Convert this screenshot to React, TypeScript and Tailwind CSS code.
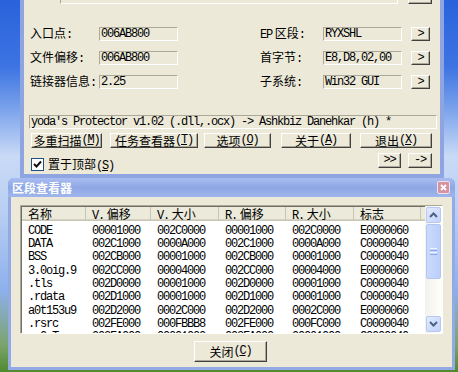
import React from 'react';

const M: React.FC<{ children: React.ReactNode; className?: string }> = ({ children, className = '' }) => (
  <span className={`font-['Liberation_Mono',monospace] tracking-[-1.2px] ${className}`}>{children}</span>
);

const Key: React.FC<{ k: string }> = ({ k }) => (
  <M>
    (<span className="underline underline-offset-[1px]">{k}</span>)
  </M>
);

const Field: React.FC<{ value?: string; className?: string }> = ({ value, className = '' }) => (
  <div className={`shrink-0 h-[14px] flex items-center border border-t-[#aca899] border-l-[#aca899] border-r-white border-b-white pl-[1px] leading-[12px] whitespace-nowrap ${className}`}>
    {value && <M>{value}</M>}
  </div>
);

const Btn: React.FC<{ children?: React.ReactNode; className?: string }> = ({ children, className = '' }) => (
  <div className={`shrink-0 flex items-center justify-center leading-[13px] whitespace-nowrap border border-t-white border-l-white border-r-[#404040] border-b-[#404040] shadow-[inset_-1px_-1px_0_#aca899] bg-[#ece9d8] ${className}`}>
    {children}
  </div>
);

const infoRows = [
  { l: '入口点', v: '006AB800', rl: <><M>EP</M> 区段<M>:</M></>, rv: 'RYXSHL' },
  { l: '文件偏移', v: '006AB800', rl: <>首字节<M>:</M></>, rv: 'E8,D8,02,00' },
  { l: '链接器信息', v: '2.25', rl: <>子系统<M>:</M></>, rv: 'Win32 GUI' },
];

const cols = [
  { w: 'w-[64px]', h: <>名称</> },
  { w: 'w-[65px]', h: <><M>V.</M> 偏移</> },
  { w: 'w-[68px]', h: <><M>V.</M> 大小</> },
  { w: 'w-[67px]', h: <><M>R.</M> 偏移</> },
  { w: 'w-[68px]', h: <><M>R.</M> 大小</> },
  { w: 'w-[67px]', h: <>标志</> },
];

const sections = [
  ['CODE', '00001000', '002C0000', '00001000', '002C0000', 'E0000060'],
  ['DATA', '002C1000', '0000A000', '002C1000', '0000A000', 'C0000040'],
  ['BSS', '002CB000', '00001000', '002CB000', '00001000', 'C0000040'],
  ['3.0oig.9', '002CC000', '00004000', '002CC000', '00004000', 'E0000060'],
  ['.tls', '002D0000', '00001000', '002D0000', '00001000', 'C0000040'],
  ['.rdata', '002D1000', '00001000', '002D1000', '00001000', 'C0000040'],
  ['a0t153u9', '002D2000', '0002C000', '002D2000', '0002C000', 'E0000060'],
  ['.rsrc', '002FE000', '000FBBB8', '002FE000', '000FC000', 'C0000040'],
  ['.r0sT', '003FA000', '00001000', '003FA000', '00001000', 'C0000040'],
];

const Chevron: React.FC<{ down?: boolean }> = ({ down }) => (
  <svg width="9" height="6" viewBox="0 0 9 6">
    <path d={down ? 'M1 1 L4.5 4.5 L8 1' : 'M1 5 L4.5 1.5 L8 5'} fill="none" stroke="#4d6185" strokeWidth="2" />
  </svg>
);

const ScrollBtn: React.FC<{ down?: boolean }> = ({ down }) => (
  <div className="w-[15px] h-[16px] flex items-center justify-center rounded-[2px] border border-[#b5c9f4] bg-[linear-gradient(135deg,#e1eafe,#c2d3fb)]">
    <Chevron down={down} />
  </div>
);

export default function App() {
  return (
    <div className="relative w-[458px] h-[372px] overflow-hidden bg-[linear-gradient(180deg,#2a62dc_0%,#3d74e2_18%,#7fa6ec_30%,#c9daf6_42%,#b7cdf2_58%,#8db0ec_78%,#7aa36a_93%,#4e8a2e_100%)] font-['Noto_Sans_CJK_SC',sans-serif] text-[12px] leading-[14px] text-black">
      {/* main window */}
      <div className="absolute left-[20px] top-0 w-[424px] h-[178px] border-x-4 border-b-4 border-[#8ea5e2] bg-[#ece9d8]">
        <div className="h-[4px] flex items-end overflow-hidden">
          <Field className="ml-[36px] w-[338px]" />
          <Btn className="ml-[10px] w-[24px] h-[18px]" />
        </div>

        {infoRows.map((r, i) => (
          <div key={i} className={`flex items-center h-[14px] ${i === 0 ? 'mt-[23px]' : 'mt-[10px]'}`}>
            <div className="w-[75px] pl-[6px] shrink-0 whitespace-nowrap">
              {r.l}
              <M>:</M>
            </div>
            <Field value={r.v} className="w-[79px]" />
            <div className="ml-[82px] w-[63px] shrink-0 whitespace-nowrap">{r.rl}</div>
            <Field value={r.rv} className="w-[79px]" />
            <Btn className="ml-[9px] w-[19px] h-[14px]">
              <M>&gt;</M>
            </Btn>
          </div>
        ))}

        <Field
          value="yoda's Protector v1.02 (.dll,.ocx) -> Ashkbiz Danehkar (h) *"
          className="mt-[26px] ml-[5px] w-[408px]"
        />

        <div className="mt-[4px] flex h-[15px]">
          <Btn className="ml-[7px] w-[71px] h-[15px]">多重扫描<Key k="M" /></Btn>
          <Btn className="ml-[8px] w-[88px] h-[15px]">任务查看器<Key k="T" /></Btn>
          <Btn className="ml-[6px] w-[67px] h-[15px]">选项<Key k="O" /></Btn>
          <Btn className="ml-[10px] w-[70px] h-[15px]">关于<Key k="A" /></Btn>
          <Btn className="ml-[9px] w-[72px] h-[15px]">退出<Key k="X" /></Btn>
        </div>

        <div className="mt-[5px] flex items-start h-[18px]">
          <div className="ml-[7px] mt-[5px] w-[13px] h-[13px] shrink-0 flex items-center justify-center bg-white border border-[#1c5180]">
            <svg width="9" height="9" viewBox="0 0 9 9">
              <path d="M1 4 L3.5 6.5 L8 1.5" fill="none" stroke="#111" strokeWidth="2" />
            </svg>
          </div>
          <div className="ml-[4px] mt-[4px] whitespace-nowrap">
            置于顶部<Key k="S" />
          </div>
          <Btn className="ml-auto w-[23px] h-[15px]"><M>&gt;&gt;</M></Btn>
          <Btn className="ml-[7px] mr-[8px] w-[24px] h-[15px]"><M>-&gt;</M></Btn>
        </div>
      </div>

      {/* section viewer dialog */}
      <div className="absolute left-[8px] top-[178px] w-[447px] h-[192px] flex flex-col bg-[#93aae6] rounded-t-[6px]">
        <div className="h-[19px] shrink-0 flex items-center pl-[4px] pr-[5px] rounded-t-[6px] bg-[linear-gradient(180deg,#a9bdf0,#8ea7e5_50%,#9fb5ec)]">
          <span className="text-white font-bold">区段查看器</span>
          <div className="ml-auto w-[13px] h-[13px] flex items-center justify-center rounded-[2px] border border-[#f0e4ec] bg-[#d7929f]">
            <svg width="7" height="7" viewBox="0 0 7 7">
              <path d="M1 1 L6 6 M6 1 L1 6" stroke="#fff" strokeWidth="1.8" />
            </svg>
          </div>
        </div>

        <div className="mx-[3px] mb-[3px] flex-1 bg-[#ece9d8] flex flex-col">
          <div className="ml-[9px] mt-[8px] w-[423px] h-[129px] flex bg-white border border-t-[#aca899] border-l-[#aca899] border-r-white border-b-white shadow-[inset_1px_1px_0_#716f64]">
            <div className="flex-1 flex flex-col overflow-hidden pl-[1px] pt-[1px]">
              <div className="h-[14px] shrink-0 flex bg-[#ebeadb] border-b border-[#cbc7b8] shadow-[inset_0_-1px_0_#d6d2c2]">
                {cols.map((c, i) => (
                  <div key={i} className={`${c.w} shrink-0 pl-[6px] leading-[13px] whitespace-nowrap border-r border-[#c7c5b2]`}>
                    {c.h}
                  </div>
                ))}
              </div>
              <div className="pt-[2px] flex flex-col">
                {sections.map((row, ri) => (
                  <div key={ri} className="h-[13.33px] shrink-0 flex items-center leading-[13px]">
                    {row.map((cell, ci) => (
                      <div key={ci} className={`${cols[ci].w} shrink-0 pl-[6px] whitespace-nowrap`}>
                        <M>{cell}</M>
                      </div>
                    ))}
                  </div>
                ))}
              </div>
            </div>
            <div className="w-[17px] shrink-0 flex flex-col items-center pt-[1px] pb-[1px] bg-[linear-gradient(90deg,#f3f1ec,#fefefb)]">
              <ScrollBtn />
              <div className="mt-[1px] w-[15px] h-[55px] rounded-[2px] border border-[#b3c6f2] bg-[linear-gradient(90deg,#cbdafc,#bccffb)] flex flex-col items-center justify-center gap-[1px]">
                <div className="w-[7px] h-[1px] bg-[#eef3fe]" />
                <div className="w-[7px] h-[1px] bg-[#8da9e8]" />
                <div className="w-[7px] h-[1px] bg-[#eef3fe]" />
                <div className="w-[7px] h-[1px] bg-[#8da9e8]" />
              </div>
              <div className="mt-auto">
                <ScrollBtn down />
              </div>
            </div>
          </div>

          <Btn className="mt-[7px] ml-[183px] w-[73px] h-[21px]">
            关闭<Key k="C" />
          </Btn>
        </div>
      </div>
    </div>
  );
}
